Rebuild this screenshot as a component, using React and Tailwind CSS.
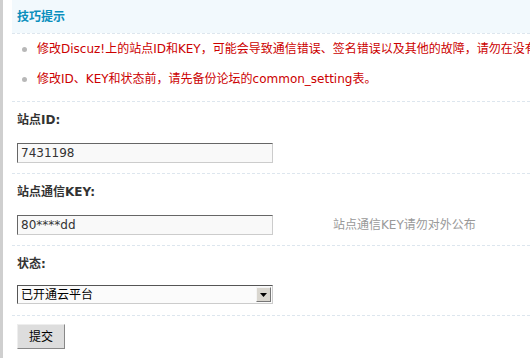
import React from 'react';

const font = { fontFamily: 'Verdana, "DejaVu Sans", "Noto Sans CJK SC", sans-serif' };

const tips = [
  '修改Discuz!上的站点ID和KEY，可能会导致通信错误、签名错误以及其他的故障，请勿在没有确认的情况下随意修改',
  '修改ID、KEY和状态前，请先备份论坛的common_setting表。',
];

const Label = ({ children }) => (
  <div className="h-[36px] flex items-center pl-[5px] border-t border-dashed border-[#dde6ee] font-bold text-[#333]">
    {children}
  </div>
);

const App = () => {
  return (
    <div className="w-[530px] h-[358px] overflow-hidden bg-white text-[12px] text-[#555]" style={font}>
      <div className="h-full border-l-[3px] border-[#cfcfcf] pl-[9px]">
        {/* 技巧提示 */}
        <div className="h-[33px] flex items-center pl-[5px] bg-[#f2f9fd] font-bold text-[#0a8fbd]">技巧提示</div>
        <ul className="border-t border-dashed border-[#dde6ee] pb-[7px]">
          {tips.map((t) => (
            <li key={t} className="h-[30px] flex items-center whitespace-nowrap text-[#c00]">
              <span className="w-[5px] h-[5px] rounded-full bg-[#b8b8b8] ml-[10px] mr-[10px] shrink-0" />
              {t}
            </li>
          ))}
        </ul>

        <Label>站点ID:</Label>
        <div className="pt-[6px] pb-[10px] pl-[5px]">
          <input
            defaultValue="7431198"
            className="block w-[256px] h-[20px] px-[3px] bg-[#f9f9f9] border border-[#666_#ccc_#ccc_#666] text-[#333] outline-none"
            style={font}
          />
        </div>

        <Label>站点通信KEY:</Label>
        <div className="pt-[6px] pb-[10px] pl-[5px] flex items-center">
          <input
            defaultValue="80****dd"
            className="block w-[256px] h-[20px] px-[3px] bg-[#f9f9f9] border border-[#666_#ccc_#ccc_#666] text-[#333] outline-none"
            style={font}
          />
          <span className="ml-[60px] text-[#999]">站点通信KEY请勿对外公布</span>
        </div>

        <Label>状态:</Label>
        <div className="pt-[4px] pb-[11px] pl-[5px]">
          <div className="relative w-[256px] h-[19px]">
            <select
              className="appearance-none block w-full h-full pl-[3px] bg-[#fbfbfb] border border-[#555_#ccc_#ccc_#555] text-black outline-none"
              style={font}
              defaultValue="1"
            >
              <option value="1">已开通云平台</option>
              <option value="0">关闭云平台</option>
            </select>
            <div className="absolute right-[2px] top-[2px] w-[15px] h-[15px] bg-[#d9d6cf] border border-[#f4f4f4_#777_#777_#f4f4f4] flex items-center justify-center pointer-events-none">
              <svg width="7" height="4" viewBox="0 0 7 4">
                <path d="M0 0h7L3.5 4z" fill="#000" />
              </svg>
            </div>
          </div>
        </div>

        <div className="border-t border-dashed border-[#dde6ee] pt-[8px] pl-[5px]">
          <button
            className="w-[48px] h-[25px] bg-[#ddd] border border-[#eee_#888_#888_#eee] text-black"
            style={font}
          >
            提交
          </button>
        </div>
      </div>
    </div>
  );
};

export default App;
